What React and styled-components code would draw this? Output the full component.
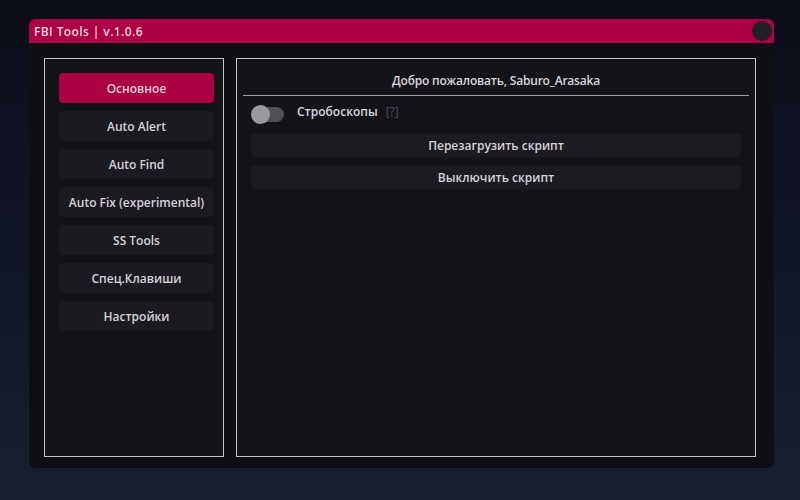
import styled, { createGlobalStyle } from "styled-components";

const GlobalStyle = createGlobalStyle`
  html, body {
    margin: 0;
    padding: 0;
    width: 800px;
    height: 500px;
    overflow: hidden;
  }
  body {
    background: linear-gradient(180deg, #0b0c18 0%, #121728 55%, #1a1f30 100%);
    font-family: "Open Sans", "DejaVu Sans", sans-serif;
  }
`;

const Page = styled.div`
  width: 800px;
  height: 500px;
  padding: 19px 0 0 29px;
  box-sizing: border-box;
`;

const Window = styled.div`
  width: 745px;
  height: 449px;
  background: #0f0e12;
  border-radius: 6px;
  display: flex;
  flex-direction: column;
  overflow: hidden;
`;

const TitleBar = styled.div`
  height: 24px;
  background: #ad0045;
  display: flex;
  align-items: center;
  justify-content: space-between;
  padding: 0 2px 0 5px;
  flex-shrink: 0;
`;

const Title = styled.span`
  color: #e6d4dc;
  font-size: 12px;
  font-weight: 600;
  letter-spacing: 0.4px;
`;

const CloseDot = styled.div`
  width: 20px;
  height: 20px;
  border-radius: 50%;
  background: #222224;
`;

const Body = styled.div`
  flex: 1;
  display: flex;
  gap: 12px;
  padding: 15px 18px 10px 15px;
`;

const Panel = styled.div`
  background: #141318;
  border: 1px solid #c4c4c8;
  height: 399px;
  box-sizing: border-box;
`;

const SidePanel = styled(Panel)`
  width: 180px;
  display: flex;
  flex-direction: column;
  gap: 8px;
  padding: 14px 9px 0 14px;
`;

const MainPanel = styled(Panel)`
  flex: 1;
  padding: 0 6px 0 6px;
  display: flex;
  flex-direction: column;
`;

const NavButton = styled.div`
  height: 30px;
  border-radius: 4px;
  background: ${(p) => (p.$active ? "#ad0045" : "#1b1a20")};
  color: #d6d2d8;
  font-size: 12px;
  font-weight: 600;
  display: flex;
  align-items: center;
  justify-content: center;
`;

const Welcome = styled.div`
  height: 37px;
  display: flex;
  align-items: center;
  justify-content: center;
  color: #d8d6dc;
  font-size: 12px;
  font-weight: 600;
  letter-spacing: -0.2px;
  border-bottom: 1px solid #9c9ca2;
  padding-top: 7px;
  box-sizing: border-box;
`;

const ToggleRow = styled.div`
  display: flex;
  align-items: center;
  height: 36px;
  margin-bottom: 1px;
  padding-left: 9px;
`;

const Track = styled.div`
  position: relative;
  width: 32px;
  height: 15px;
  border-radius: 8px;
  background: #4f4f54;
  margin-right: 13px;
`;

const Knob = styled.div`
  position: absolute;
  left: -1px;
  top: -2px;
  width: 19px;
  height: 19px;
  border-radius: 50%;
  background: #9a9a9c;
`;

const Label = styled.span`
  color: #d8d6dc;
  font-size: 12px;
  font-weight: 600;
  margin-bottom: 5px;
`;

const Hint = styled.span`
  color: #4b4b5c;
  font-size: 12px;
  margin: 0 0 5px 8px;
`;

const ActionButton = styled.div`
  height: 24px;
  margin: 0 8px 8px 8px;
  border-radius: 4px;
  background: #1c1b21;
  color: #d6d2d8;
  font-size: 12px;
  font-weight: 600;
  display: flex;
  align-items: center;
  justify-content: center;
`;

const menu = [
  "Основное",
  "Auto Alert",
  "Auto Find",
  "Auto Fix (experimental)",
  "SS Tools",
  "Спец.Клавиши",
  "Настройки",
];

export default function App() {
  return (
    <>
      <GlobalStyle />
      <Page>
        <Window>
          <TitleBar>
            <Title>FBI Tools | v.1.0.6</Title>
            <CloseDot />
          </TitleBar>
          <Body>
            <SidePanel>
              {menu.map((item, i) => (
                <NavButton key={item} $active={i === 0}>
                  {item}
                </NavButton>
              ))}
            </SidePanel>
            <MainPanel>
              <Welcome>Добро пожаловать, Saburo_Arasaka</Welcome>
              <ToggleRow>
                <Track>
                  <Knob />
                </Track>
                <Label>Стробоскопы</Label>
                <Hint>[?]</Hint>
              </ToggleRow>
              <ActionButton>Перезагрузить скрипт</ActionButton>
              <ActionButton>Выключить скрипт</ActionButton>
            </MainPanel>
          </Body>
        </Window>
      </Page>
    </>
  );
}
